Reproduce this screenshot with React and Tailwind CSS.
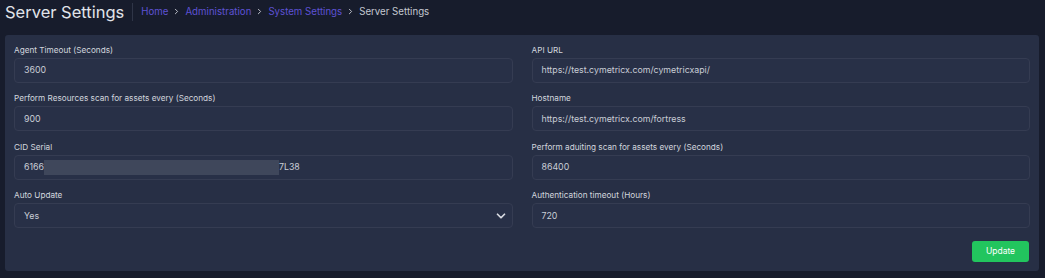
import { ChevronDown, ChevronRight } from "lucide-react"

const left = [
  { label: "Agent Timeout (Seconds)", value: "3600" },
  { label: "Perform Resources scan for assets every (Seconds)", value: "900" },
  { label: "CID Serial", value: "serial" },
  { label: "Auto Update", value: "Yes", select: true },
]

const right = [
  { label: "API URL", value: "https://test.cymetricx.com/cymetricxapi/" },
  { label: "Hostname", value: "https://test.cymetricx.com/fortress" },
  { label: "Perform aduiting scan for assets every (Seconds)", value: "86400" },
  { label: "Authentication timeout (Hours)", value: "720" },
]

export default function App() {
  return (
    <div className="w-[1045px] h-[278px] overflow-hidden bg-[#171c2c] font-['Inter',sans-serif]">
      <div className="flex items-center h-[24px] pl-[5px]">
        <h1 className="text-[16.5px] leading-[24px] text-[#e1e4ea]">Server Settings</h1>
        <div className="w-px h-[18px] bg-[#2f3547] ml-[8px] mr-[8px]" />
        <nav className="flex items-center gap-[4px] text-[9.7px] text-[#5e52d4]">
          <span>Home</span>
          <ChevronRight size={9} strokeWidth={2.5} className="text-[#c4c8d0]" />
          <span>Administration</span>
          <ChevronRight size={9} strokeWidth={2.5} className="text-[#c4c8d0]" />
          <span>System Settings</span>
          <ChevronRight size={9} strokeWidth={2.5} className="text-[#c4c8d0]" />
          <span className="text-[#c4c8d0]">Server Settings</span>
        </nav>
      </div>

      <div className="mx-[5px] mt-[10.5px] w-[1034px] bg-[#272f45] rounded-[3px] p-[9px] pb-[8.5px]">
        <div className="grid grid-cols-2 gap-x-[19px]">
          <div className="flex flex-col gap-[9.5px]">
            {left.map(f => <Field key={f.label} {...f} />)}
          </div>
          <div className="flex flex-col gap-[9.5px]">
            {right.map(f => <Field key={f.label} {...f} />)}
          </div>
        </div>
        <div className="flex justify-end mt-[13px]">
          <button className="w-[57px] h-[21px] mr-[1px] rounded-[3px] bg-[#22c55e] text-white text-[8.5px]">
            Update
          </button>
        </div>
      </div>
    </div>
  )
}

function Field({ label, value, select }) {
  return (
    <div>
      <label className="block text-[8.2px] leading-[12px] mb-[2px] text-[#d2d6de]">{label}</label>
      <div className="flex items-center h-[25px] px-[9px] rounded-[4px] border border-[#353c52] bg-[#283047] text-[8.8px] text-[#c9cdd6]">
        {value === "serial" ? (
          <>
            <span>6166</span>
            <span className="inline-block w-[235px] h-[15px] bg-[#3f475b]" />
            <span>7L38</span>
          </>
        ) : (
          <span className="flex-1">{value}</span>
        )}
        {select && <ChevronDown size={14} strokeWidth={3} className="text-[#d8dbe2] ml-auto -mr-[5px]" />}
      </div>
    </div>
  )
}
